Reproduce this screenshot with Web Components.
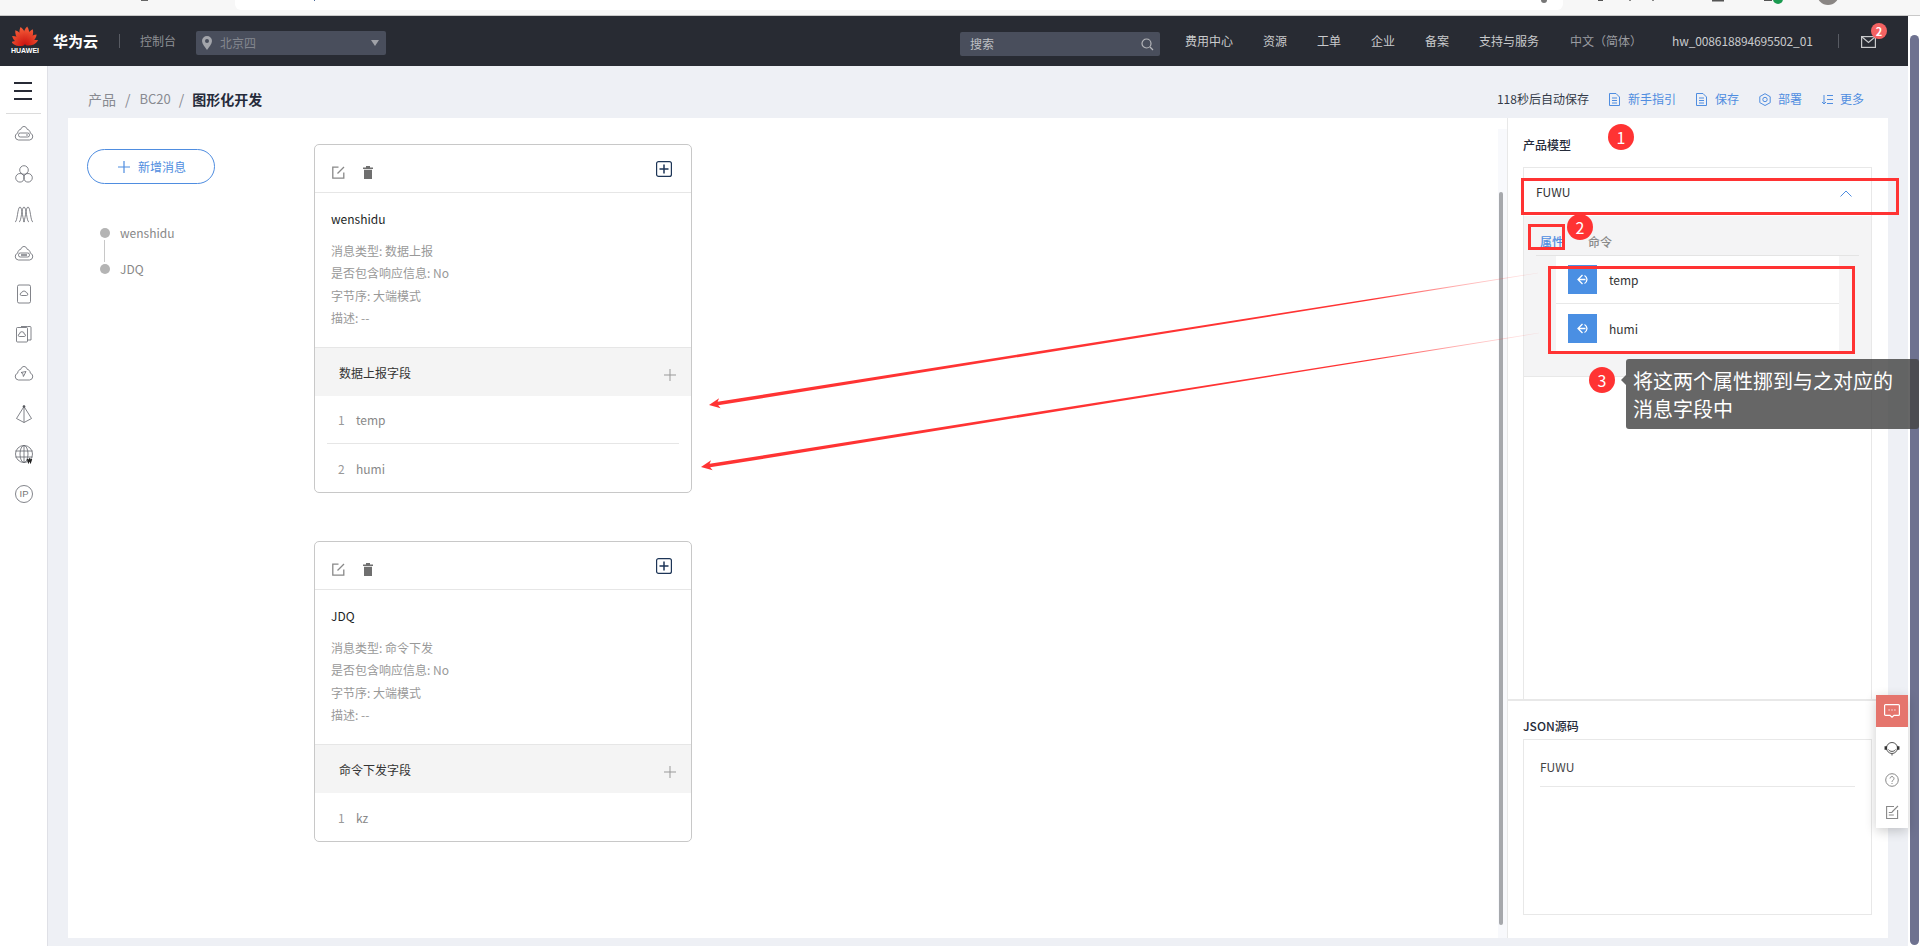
<!DOCTYPE html>
<html lang="zh-CN"><head><meta charset="utf-8"><title>图形化开发</title>
<style>
html,body{margin:0;padding:0;background:#fff;overflow:hidden}
body{font:12px/1.4 "Noto Sans CJK SC","Open Sans",sans-serif;color:#333;width:1920px;height:946px}
</style></head><body>
<hw-page>
  <hw-chrome slot="chrome"></hw-chrome>
  <hw-topbar slot="top"></hw-topbar>
  <hw-sidebar slot="side"></hw-sidebar>
  <hw-crumbs slot="crumbs"></hw-crumbs>
  <hw-work slot="work">
    <msg-rail slot="rail"></msg-rail>
    <msg-card slot="cards" style="height:349px">
      <span slot="name">wenshidu</span>
      <info-line>消息类型: 数据上报</info-line><info-line>是否包含响应信息: No</info-line><info-line>字节序: 大端模式</info-line><info-line>描述: --</info-line>
      <span slot="field">数据上报字段</span>
      <field-row slot="rows" n="1">temp</field-row>
      <field-row slot="rows" n="2" last>humi</field-row>
    </msg-card>
    <msg-card slot="cards" style="height:301px">
      <span slot="name">JDQ</span>
      <info-line>消息类型: 命令下发</info-line><info-line>是否包含响应信息: No</info-line><info-line>字节序: 大端模式</info-line><info-line>描述: --</info-line>
      <span slot="field">命令下发字段</span>
      <field-row slot="rows" n="1" last>kz</field-row>
    </msg-card>
    <model-panel slot="side"></model-panel>
    <json-panel slot="side"></json-panel>
  </hw-work>
  <float-tools slot="over"></float-tools>
  <note-layer slot="over"></note-layer>
</hw-page>
<script>
function def(name, html, init){
  customElements.define(name, class extends HTMLElement{
    constructor(){super();this.attachShadow({mode:'open'}).innerHTML=html;if(init)init(this,this.shadowRoot)}
  });
}
def('hw-page',`<style>
:host{display:block;position:relative;width:1920px;height:946px;overflow:hidden}
.row{display:flex;height:930px}
.app{width:1908px;display:flex;flex-direction:column}
.gutter{width:12px;background:#fff}
.thumb{width:9px;height:910px;margin:19px 0 0 2px;border-radius:5px;background:#6e7290}
.body{flex:1;display:flex;min-height:0}
.main{flex:1;background:#eef0f5;display:flex;flex-direction:column;min-width:0}
</style>
<slot name="chrome"></slot>
<div class="row"><div class="app"><slot name="top"></slot>
<div class="body"><slot name="side"></slot><div class="main"><slot name="crumbs"></slot><slot name="work"></slot></div></div></div>
<div class="gutter"><div class="thumb"></div></div></div>
<slot name="over"></slot>`);

def('hw-chrome',`<style>
:host{display:block;height:16px}
svg{display:block}
</style>
<svg width="1920" height="16" viewBox="0 0 1920 16">
<rect width="1920" height="15" fill="#f7f7f7"/><rect y="15" width="1920" height="1" fill="#c9c9c9"/>
<path d="M235 0H1563V4a6 6 0 0 1-6 6H241a6 6 0 0 1-6-6Z" fill="#fff"/>
<rect x="141" y="0" width="7" height="1" fill="#666"/><rect x="314" y="0" width="1" height="1" fill="#4a6a9a"/>
<circle cx="1544" cy="0" r="3" fill="#777"/><rect x="1598" y="0" width="5" height="1" fill="#555"/><rect x="1629" y="0" width="2" height="1" fill="#888"/><rect x="1652" y="0" width="2" height="1" fill="#888"/>
<rect x="1712" y="0" width="12" height="1.500" fill="#555"/><rect x="1764" y="0" width="8" height="1" fill="#555"/>
<circle cx="1778" cy="-1" r="5" fill="#1a9a50"/><circle cx="1828" cy="-6" r="11" fill="#8a8684"/>
</svg>`);

const petal=(a,l)=>`<path transform="rotate(${a})" d="M0 -.8C${-l*.22} ${-l*.3} ${-l*.26} ${-l*.72} ${-l*.06} ${-l}C${l*.2} ${-l*.72} ${l*.16} ${-l*.3} 0 -.8Z"/>`;
def('hw-topbar',`<style>
:host{display:flex;align-items:center;height:50px;background:#282b33;color:#c9cacc;font-size:12px;line-height:16px;flex:none}
.logo{margin-left:12px;width:26px;height:29px;display:flex;flex-direction:column;align-items:center;flex:none;margin-top:-1px}
.logo svg{display:block;flex:none}
.logo span{font:700 7px/8px "Liberation Sans",sans-serif;color:#fff;letter-spacing:0;margin-top:1px}
.brand{margin-left:15px;font-size:15px;font-weight:700;color:#fff;line-height:20px;width:45px;flex:none}
.div{width:1px;height:14px;background:#585b63;flex:none}
.con{margin-left:20px;color:#8e9095;width:36px;flex:none;white-space:nowrap}
.region{margin-left:20px;width:190px;height:24px;background:#494e5c;border-radius:2px;display:flex;align-items:center;color:#84878f;flex:none;margin-top:4px}
.region svg{margin-left:6px;flex:none}.region b{font-weight:400;margin-left:8px;flex:1}.region i{width:0;height:0;border:4.500px solid transparent;border-top:6px solid #a0a2a8;border-bottom:0;margin-right:7px}
.search{margin-left:574px;width:200px;height:24px;background:#494e5c;border-radius:2px;display:flex;align-items:center;justify-content:space-between;padding:0 6px 0 10px;box-sizing:border-box;color:#bfc0c4;flex:none;margin-top:6px}
.n{flex:none;white-space:nowrap}
.mail{position:relative;width:15px;height:11px;margin-left:22px;flex:none;margin-top:-2px}
.mail u{position:absolute;left:10px;top:-12px;width:16px;height:16px;border-radius:50%;background:#f56262;color:#fff;font:700 11px/16px "Noto Sans CJK SC",sans-serif;text-align:center;text-decoration:none}
</style>
<div class="logo"><svg width="26" height="20" viewBox="-13 -19.500 26 20"><defs><linearGradient id="g" gradientUnits="userSpaceOnUse" x1="0" y1="-19" x2="0" y2="0"><stop offset="0" stop-color="#f8603a"/><stop offset="1" stop-color="#c9100e"/></linearGradient></defs>
<g fill="url(#g)">${petal(-72,14)+petal(-50,16)+petal(-29,18)+petal(-10,19)+petal(10,19)+petal(29,18)+petal(50,16)+petal(72,14)}</g></svg><span>HUAWEI</span></div>
<div class="brand">华为云</div><div class="div" style="margin-left:21px"></div>
<div class="con">控制台</div>
<div class="region"><svg width="10" height="14" viewBox="0 0 10 14"><path d="M5 0a5 5 0 0 1 5 5c0 3-3 6-5 9-2-3-5-6-5-9a5 5 0 0 1 5-5Z" fill="#a3a5ab"/><circle cx="5" cy="5" r="2" fill="#494e5c"/></svg><b>北京四</b><i></i></div>
<div class="search"><span>搜索</span><svg width="13" height="13" viewBox="0 0 13 13" fill="none" stroke="#b5b6ba" stroke-width="1.200"><circle cx="5.500" cy="5.500" r="4.500"/><path d="M9 9l3 3"/></svg></div>
<div class="n" style="margin-left:25px">费用中心</div><div class="n" style="margin-left:30px">资源</div><div class="n" style="margin-left:30px">工单</div><div class="n" style="margin-left:30px">企业</div><div class="n" style="margin-left:30px">备案</div><div class="n" style="margin-left:30px">支持与服务</div>
<div class="n" style="margin-left:31px;color:#9a9ca1">中文（简体）</div><div class="n" style="margin-left:30px;width:140px;letter-spacing:-.14px">hw_008618894695502_01</div>
<div class="div" style="margin-left:26px"></div>
<div class="mail"><svg width="15" height="12" viewBox="0 0 15 12" fill="none" stroke="#c9cacc" stroke-width="1.200"><rect x=".6" y=".6" width="13.800" height="10.800"/><path d="M1 1l6.500 5.500L14 1"/></svg><u>2</u></div>`);

const cloud=`<path d="M4.500 16a3.500 3.500 0 0 1-.9-6.800C4 6.500 5.500 5.500 6.800 5.300 7.500 3.300 8.600 2.500 10 2.500s2.500.8 3.200 2.800c1.300.2 2.800 1.200 3.200 3.900a3.500 3.500 0 0 1-.9 6.800Z"/>`;
const sideIcons=[
 cloud+`<rect x="4.500" y="9" width="11" height="4" rx="1.800"/><path d="M12 11h2"/>`,
 `<circle cx="10" cy="6" r="4.300"/><circle cx="6" cy="13.800" r="4.300"/><circle cx="14" cy="13.800" r="4.300"/>`,
 `<path d="M1 18C3.500 18 3.500 3 6 3S8.500 18 11 18M5 18C7.500 18 7.500 3 10 3S12.500 18 15 18M9 18C11.500 18 11.500 3 14 3S16.500 18 19 18"/>`,
 cloud+`<rect x="4.500" y="9" width="11" height="4" rx="1.800"/><path d="M7 11h6" stroke-width="1.300"/>`,
 `<rect x="3.500" y="1" width="13" height="18" rx="1.500"/><path d="M7.500 11.500a1.300 1.300 0 0 1 0-2.600 2.600 2.600 0 0 1 5 0 1.300 1.300 0 0 1 0 2.600Z"/>`,
 `<rect x="2.500" y="3.500" width="11" height="14.500" rx="1"/><path d="M13.500 2.500h2.500a1 1 0 0 1 1 1V16h-3.500M7 2.500h6.500"/><path d="M5.500 12.500a1.200 1.200 0 0 1 0-2.400 2.400 2.400 0 0 1 4.800 0 1.200 1.200 0 0 1 0 2.400Z"/>`,
 cloud+`<path d="M7 8.500l5-1-2.600 5-.6-3Z"/>`,
 `<path d="M10 2.500L2.500 14.500l7.500 4 7.500-4Z"/><path d="M10 2.500V18.500"/><circle cx="10" cy="2.500" r="1" fill="#444"/>`,
 `<circle cx="10" cy="10" r="8.500"/><ellipse cx="10" cy="10" rx="4" ry="8.500"/><path d="M1.500 7h17M1.500 13h17M10 1.500v17"/><path d="M13.500 15l1 3 1-2.500 1 2.500 1-3" stroke-width="1.500" stroke="#222"/>`,
 `<circle cx="10" cy="10" r="8.500"/><text x="10" y="13.300" text-anchor="middle" font-family="Liberation Sans" font-size="9.500" fill="#777" stroke="none">IP</text>`
];
def('hw-sidebar',`<style>
:host{display:block;width:47px;background:#fff;flex:none;box-shadow:1px 0 0 #dfe0e6;position:relative}
.ham{padding:16px 0 0 14px;display:flex;flex-direction:column;gap:6px}
.ham i{display:block;width:18px;height:2px;background:#272a35}
.sep{height:1px;background:#dcdcdc;margin:13px 6px 0 6px}
.it{height:40px;display:flex;align-items:center;justify-content:center}
svg{display:block;fill:none;stroke:#62656c;stroke-width:.8}
</style><div class="ham"><i></i><i></i><i></i></div><div class="sep"></div>
${sideIcons.map(s=>`<div class="it"><svg width="20" height="20" viewBox="0 0 20 20">${s}</svg></div>`).join('')}`);

const bl='#4f8de0';
def('hw-crumbs',`<style>
:host{display:flex;align-items:center;height:52px;padding:14px 44px 0 41px;box-sizing:border-box;font-size:12px;color:#888a91;flex:none;line-height:16px}
.c{font-size:14px;line-height:18px}
.bc{font-size:13px;line-height:18px}
.s{margin:0 9px;color:#888a91;font-size:14px;line-height:18px}
.s2{margin:0 8px}
b{font-size:14px;font-weight:700;color:#252b3a;line-height:18px}
.sp{flex:1}
.auto{color:#333a48;margin-right:20px}
.a{display:flex;align-items:center;color:${bl};margin-right:20px}
.a:last-child{margin-right:0}
svg{margin-right:8px;display:block;fill:none;stroke:${bl};stroke-width:1}
</style><span class="c">产品</span><span class="s">/</span><span class="bc">BC20</span><span class="s s2">/</span><b>图形化开发</b><span class="sp"></span>
<span class="auto">118秒后自动保存</span>
<span class="a"><svg width="11" height="13" viewBox="0 0 11 13"><path d="M.5.500h6.500l3.500 3.500v8.500H.5ZM3 5h5M3 7.500h5M3 10h5"/></svg>新手指引</span>
<span class="a"><svg width="11" height="13" viewBox="0 0 11 13"><path d="M.5.500h6.500l3.500 3.500v8.500H.5ZM3 5h5M3 7.500h5M3 10h5"/></svg>保存</span>
<span class="a"><svg width="12" height="13" viewBox="0 0 12 13" style="margin-right:7px"><path d="M6 .7l5.200 3v6L6 12.500.8 9.600v-6Z"/><circle cx="6" cy="6.500" r="2.200"/></svg>部署</span>
<span class="a"><svg width="11" height="11" viewBox="0 0 11 11" style="margin-right:7px"><path d="M5 1.500h6M5 5.500h6M5 9.500h6M2 1v9M0 8l2 2 2-2"/></svg>更多</span>`);

def('hw-work',`<style>
:host{display:flex;height:820px;width:1820px;margin-left:21px;background:#fff;flex:none}
.canvas{width:1184px;padding-top:26px;display:flex;flex-direction:column;gap:48px;box-sizing:border-box;flex:none}
.track{width:9px;flex:none;margin-top:11px;background:#f8f9fc;display:flex;flex-direction:column;align-items:center}
.track i{display:block;width:4px;height:733px;margin-top:63px;margin-left:-3px;background:#a6a8ac;border-radius:2px}
.right{width:381px;border-left:1px solid #e8e8e8;box-sizing:border-box;flex:none;display:flex;flex-direction:column}
</style><slot name="rail"></slot><div class="canvas"><slot name="cards"></slot></div><div class="track"><i></i></div><div class="right"><slot name="side"></slot></div>`);

def('msg-rail',`<style>
:host{display:block;width:246px;flex:none;padding:31px 0 0 19px;box-sizing:border-box}
.btn{width:128px;height:35px;border:1px solid ${bl};border-radius:18px;box-sizing:border-box;display:flex;align-items:center;color:${bl};padding:2px 0 0 30px}
svg{margin:-2px 8px 0 0;display:block}
.list{margin-top:44px;padding-left:13px;color:#888}
.i{display:flex;align-items:center;height:10px;line-height:10px;white-space:nowrap}
.d{width:10px;height:10px;border-radius:50%;background:#b4b4b4;margin-right:10px;flex:none}
.l{width:1px;height:22px;background:#c8c8c8;margin:2px 0 2px 4px}
</style><div class="btn"><svg width="12" height="12" viewBox="0 0 12 12" stroke="${bl}" stroke-width="1.200"><path d="M6 0v12M0 6h12"/></svg>新增消息</div>
<div class="list"><div class="i"><span class="d"></span>wenshidu</div><div class="l"></div><div class="i"><span class="d"></span>JDQ</div></div>`);

def('msg-card',`<style>
:host{display:flex;flex-direction:column;width:378px;box-sizing:border-box;border:1px solid #c8c8c8;border-radius:5px;flex:none;overflow:hidden}
.head{height:47px;border-bottom:1px solid #e6e6e6;display:flex;align-items:flex-start;padding-left:17px;flex:none}
.head svg{display:block;flex:none}
.e{margin-top:21px}.t{margin:21px 0 0 18px}.p{margin:16px 0 0 auto;margin-right:19px}
.body{height:154px;padding:16px 16px 0;box-sizing:border-box;flex:none}
.name{display:block;font-weight:400;color:#1c1f26;line-height:20px;margin-bottom:11px}
.sec{height:49px;background:#f4f4f4;border-top:1px solid #e6e6e6;box-sizing:border-box;display:flex;align-items:center;justify-content:space-between;padding:2px 15px 0 24px;color:#333;flex:none}
.sec svg{margin-top:3px}
.rows{display:flex;flex-direction:column;flex:1}
</style><div class="head">
<svg class="e" width="13" height="13" viewBox="0 0 13 13" fill="none" stroke="#888" stroke-width="1.300"><path d="M6.500 1.200H.8v11h11V6.500M5.500 7.500L12 1"/></svg>
<svg class="t" width="10" height="13" viewBox="0 0 10 13" fill="#6f6f6f"><path d="M3 0h4v1.500h3v1.500H0V1.500h3ZM1 3.800h8V13H1Z"/></svg>
<svg class="p" width="16" height="16" viewBox="0 0 16 16" fill="none" stroke="#1d3557" stroke-width="1.200"><rect x=".6" y=".6" width="14.800" height="14.800" rx="2"/><path d="M8 3.500v9M3.500 8h9" stroke-width="1.500"/></svg></div>
<div class="body"><span class="name"><slot name="name"></slot></span><slot></slot></div>
<div class="sec"><slot name="field"></slot><svg width="12" height="12" viewBox="0 0 12 12" stroke="#999" stroke-width="1"><path d="M6 0v12M0 6h12"/></svg></div>
<div class="rows"><slot name="rows"></slot></div>`);

def('info-line',`<style>:host{display:block;color:#999;line-height:22.300px;white-space:nowrap}</style><slot></slot>`);

customElements.define('field-row', class extends HTMLElement{
  constructor(){super();const r=this.attachShadow({mode:'open'});
    r.innerHTML=`<style>
    :host{display:flex;align-items:center;height:48px;margin:0 12px;padding:2px 0 0 12px;box-sizing:border-box;border-bottom:1px solid #e6e6e6;color:#888;flex:none}
    :host([last]){border-bottom:0}
    .n{width:17px;color:#999;flex:none;margin-left:-1px;margin-right:1px}
    </style><span class="n"></span><slot></slot>`;}
  connectedCallback(){this.shadowRoot.querySelector('.n').textContent=this.getAttribute('n')}
});

const rowIcon=`<svg width="29" height="29" viewBox="0 0 29 29"><rect width="29" height="29" fill="#4a8fe3"/><path d="M14.500 10L10 14.500l4.500 4.500M10.500 14.500h7M16.500 10.500a5 5 0 0 1 2.500 4 5 5 0 0 1-2.500 4" fill="none" stroke="#fff" stroke-width="1.300"/></svg>`;
def('model-panel',`<style>
:host{display:block;height:581px;border-bottom:2px solid #e8e8e8;flex:none;overflow:hidden}
h4{margin:0;font-size:12px;font-weight:500;color:#252b3a;line-height:16px;padding:19px 0 14px 15px}
.box{margin:0 16px 0 15px;border:1px solid #e8e8e8;border-bottom:0;height:532px;box-sizing:border-box}
.hd{height:48px;display:flex;padding:15px 19px 0 12px;box-sizing:border-box;justify-content:space-between;color:#333;line-height:17px}
.hd svg{margin-top:7px;display:block}
.grey{height:161px;background:#f4f4f5;border-bottom:1px solid #e8e8e8;padding:0 12px;box-sizing:border-box}
.tabs{height:40px;border-bottom:1px solid #e4e4e4;display:flex;padding:17px 0 0 4px;box-sizing:border-box;line-height:18px;gap:24px;font-weight:500;color:#8a8a8a}
.tabs .on{color:${bl}}
.list{margin:0 20px;background:#fff;height:96px}
.r{height:48px;display:flex;align-items:center;padding-left:12px;box-sizing:border-box;color:#333;gap:12px}
.r svg{display:block;flex:none}.r span{margin-top:2px}
.r:first-child{border-bottom:1px solid #e8e8e8}
</style><h4>产品模型</h4><div class="box"><div class="hd"><span>FUWU</span><svg width="12" height="7" viewBox="0 0 12 7" fill="none" stroke="${bl}"><path d="M.5 6.500L6 1l5.500 5.500"/></svg></div>
<div class="grey"><div class="tabs"><span class="on">属性</span><span>命令</span></div>
<div class="list"><div class="r">${rowIcon}<span>temp</span></div><div class="r">${rowIcon}<span>humi</span></div></div></div></div>`);

def('json-panel',`<style>
:host{display:block;flex:1;padding:0 16px 0 15px}
h4{margin:0;font-size:12px;font-weight:500;color:#252b3a;line-height:16px;padding:17px 0 5px 0}
.box{border:1px solid #e8e8e8;height:176px;box-sizing:border-box;padding:18px 16px 0}
.f{color:#444;line-height:18px;padding-bottom:10px;border-bottom:1px solid #e8e8e8}
</style><h4>JSON源码</h4><div class="box"><div class="f">FUWU</div></div>`);

def('float-tools',`<style>
:host{position:absolute;left:1876px;top:695px;width:32px;height:133px;background:#fff;box-shadow:0 3px 12px rgba(0,0,0,.2);display:flex;flex-direction:column}
.red{height:32px;background:#e5756d;display:flex;align-items:center;justify-content:center;margin-bottom:5px}
.i{height:32px;display:flex;align-items:center;justify-content:center}
svg{display:block}
</style><div class="red"><svg width="16" height="14" viewBox="0 0 16 14" fill="none" stroke="#fff" stroke-width="1.200"><path d="M1.600.6h12.800a1 1 0 0 1 1 1v8.800a1 1 0 0 1-1 1H10L8 13.200 6 11.400H1.600a1 1 0 0 1-1-1V1.600a1 1 0 0 1 1-1Z"/><path d="M4.500 6h1.200M7.400 6h1.200M10.300 6h1.200"/></svg></div>
<div class="i"><svg width="16" height="15" viewBox="0 0 16 15" fill="none" stroke="#555"><circle cx="8" cy="7" r="5.500"/><path d="M4.500 8.500c1 2.500 6 2.500 7 0M8 13v1.500"/><path d="M1.800 5.300v3.400M14.200 5.300v3.400" stroke-width="2.500" stroke="#333"/></svg></div>
<div class="i"><svg width="14" height="14" viewBox="0 0 14 14" fill="none" stroke="#888"><circle cx="7" cy="7" r="6.300"/><path d="M5 5.500a2 2 0 1 1 3 1.800c-.7.400-1 .8-1 1.500M7 10v1"/></svg></div>
<div class="i"><svg width="13" height="14" viewBox="0 0 13 14" fill="none" stroke="#888" stroke-width="1.100"><path d="M8 1.500H.6v12h11V5M2.800 7.500h3.500M2.800 10h5M6 7l6-6"/></svg></div>`);

def('note-layer',`<style>
:host{position:absolute;left:0;top:0;width:1920px;height:946px;pointer-events:none}
svg{position:absolute;left:0;top:0}
.r{position:absolute;border:3px solid #f33;box-sizing:border-box}
.c{position:absolute;width:26px;height:26px;border-radius:50%;background:#f33;color:#fff;font-size:16px;line-height:26px;text-align:center}
.tip{position:absolute;left:1626px;top:359px;width:293px;height:70px;background:rgba(68,68,68,.82);border-radius:3px;color:#fff;font-size:20px;line-height:28px;padding:8px 0 0 7px;box-sizing:border-box;white-space:pre-line}
.tip::before{content:"";position:absolute;left:-5px;top:16px;border:5px solid transparent;border-left:0;border-right:5px solid rgba(68,68,68,.82)}
</style><svg width="1920" height="946" class="a"></svg>
<div class="r" style="left:1521px;top:178px;width:378px;height:37px"></div>
<div class="r" style="left:1528px;top:224px;width:37px;height:26px"></div>
<div class="r" style="left:1548px;top:266px;width:307px;height:88px"></div>
<div class="c" style="left:1608px;top:124px">1</div><div class="c" style="left:1567px;top:214px">2</div><div class="c" style="left:1589px;top:367px">3</div>
<div class="tip">将这两个属性挪到与之对应的
消息字段中</div>`,(el,r)=>{
  const s=r.querySelector('svg.a');
  const mk=(tx,ty,hx,hy,id)=>{
    const L=Math.hypot(tx-hx,ty-hy),dx=(tx-hx)/L,dy=(ty-hy)/L,nx=-dy,ny=dx;
    const p=(a,b)=>`${(hx+dx*a+nx*b).toFixed(2)},${(hy+dy*a+ny*b).toFixed(2)}`;
    return `<linearGradient id="${id}" gradientUnits="userSpaceOnUse" x1="${hx}" y1="${hy}" x2="${tx}" y2="${ty}"><stop offset="0" stop-color="#f33"/><stop offset=".8" stop-color="#f33"/><stop offset=".9" stop-color="#f33" stop-opacity=".4"/><stop offset="1" stop-color="#f33" stop-opacity=".08"/></linearGradient>
    <polygon fill="url(#${id})" points="${[p(0,0),p(11,-5),p(9,-1.800),p(L,-.3),p(L,.3),p(9,1.800),p(11,5)].join(' ')}"/>`;
  };
  s.innerHTML=mk(1538,273,709,405,'ga')+mk(1539,333,701,467,'gb');
});
</script>
</body></html>
